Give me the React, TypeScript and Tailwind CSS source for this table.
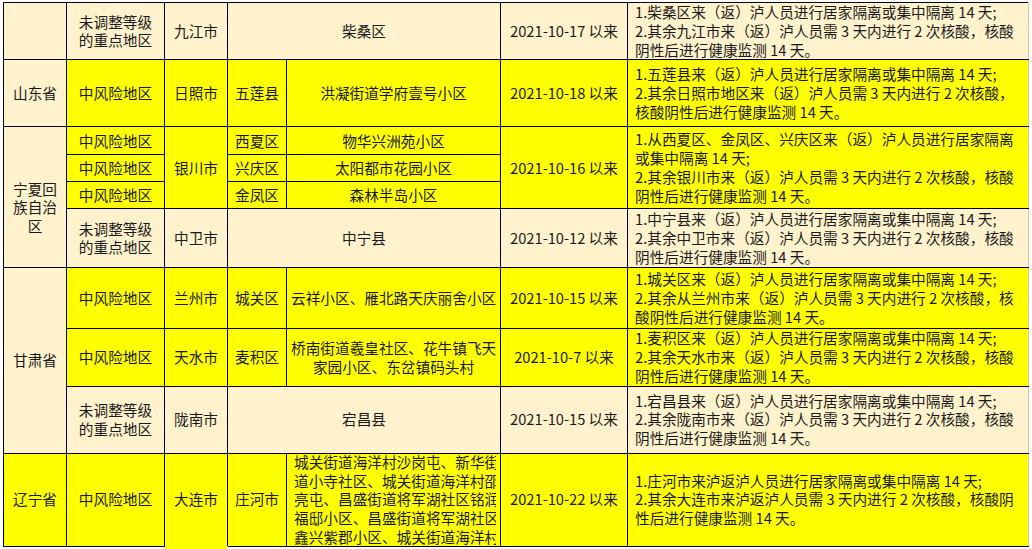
import type { ReactNode } from "react";

const Y = "bg-[#ffff00]";
const B = "bg-[#fff2cc]";

interface CellProps {
  bg: string;
  children?: ReactNode;
  rowSpan?: number;
  colSpan?: number;
  className?: string;
}

function Cell({ bg, children, rowSpan, colSpan, className = "" }: CellProps) {
  return (
    <td
      rowSpan={rowSpan}
      colSpan={colSpan}
      className={`border border-black px-[4px] py-0 text-center align-middle whitespace-nowrap ${bg} ${className}`}
    >
      {children}
    </td>
  );
}

function Note({ bg, lines, rowSpan }: { bg: string; lines: string[]; rowSpan?: number }) {
  return (
    <td
      rowSpan={rowSpan}
      className={`border border-black border-r-[#d9cba6] pl-[7px] pr-[4px] py-0 text-left align-middle whitespace-nowrap leading-[18.8px] ${bg}`}
    >
      {lines.map((l, i) => (
        <div key={i}>{l}</div>
      ))}
    </td>
  );
}

const unadjusted = (
  <>
    未调整等级
    <br />
    的重点地区
  </>
);

export default function App() {
  return (
    <div className="min-h-[549px] bg-white pt-[2px] pl-[3px] font-['Noto_Sans_CJK_SC','Noto_Sans_CJK_JP',sans-serif] text-[14.67px] leading-[18.6px] text-[#1a1a1a]">
      <table className="table-fixed border-collapse w-[1025px]">
        <colgroup>
          <col className="w-[63px]" />
          <col className="w-[98px]" />
          <col className="w-[63px]" />
          <col className="w-[59px]" />
          <col className="w-[214px]" />
          <col className="w-[127px]" />
          <col className="w-[401px]" />
        </colgroup>
        <tbody>
          <tr className="h-[57px]">
            <Cell bg={B} />
            <Cell bg={B}>{unadjusted}</Cell>
            <Cell bg={B}>九江市</Cell>
            <Cell bg={B} colSpan={2}>柴桑区</Cell>
            <Cell bg={B}>2021-10-17 以来</Cell>
            <Note
              bg={B}
              lines={[
                "1.柴桑区来（返）泸人员进行居家隔离或集中隔离 14 天;",
                "2.其余九江市来（返）泸人员需 3 天内进行 2 次核酸，核酸",
                "阴性后进行健康监测 14 天。",
              ]}
            />
          </tr>
          <tr className="h-[67px]">
            <Cell bg={B}>山东省</Cell>
            <Cell bg={Y}>中风险地区</Cell>
            <Cell bg={Y}>日照市</Cell>
            <Cell bg={Y}>五莲县</Cell>
            <Cell bg={Y}>洪凝街道学府壹号小区</Cell>
            <Cell bg={Y}>2021-10-18 以来</Cell>
            <Note
              bg={Y}
              lines={[
                "1.五莲县来（返）泸人员进行居家隔离或集中隔离 14 天;",
                "2.其余日照市地区来（返）泸人员需 3 天内进行 2 次核酸，",
                "核酸阴性后进行健康监测 14 天。",
              ]}
            />
          </tr>
          <tr className="h-[28px]">
            <Cell bg={B} rowSpan={4} className="pt-[20px]">
              宁夏回
              <br />
              族自治
              <br />区
            </Cell>
            <Cell bg={Y}>中风险地区</Cell>
            <Cell bg={Y} rowSpan={3}>银川市</Cell>
            <Cell bg={Y}>西夏区</Cell>
            <Cell bg={Y}>物华兴洲苑小区</Cell>
            <Cell bg={Y} rowSpan={3}>2021-10-16 以来</Cell>
            <Note
              bg={Y}
              rowSpan={3}
              lines={[
                "1.从西夏区、金凤区、兴庆区来（返）泸人员进行居家隔离",
                "或集中隔离 14 天;",
                "2.其余银川市来（返）泸人员需 3 天内进行 2 次核酸，核酸",
                "阴性后进行健康监测 14 天。",
              ]}
            />
          </tr>
          <tr className="h-[27px]">
            <Cell bg={Y}>中风险地区</Cell>
            <Cell bg={Y}>兴庆区</Cell>
            <Cell bg={Y}>太阳都市花园小区</Cell>
          </tr>
          <tr className="h-[27px]">
            <Cell bg={Y}>中风险地区</Cell>
            <Cell bg={Y}>金凤区</Cell>
            <Cell bg={Y}>森林半岛小区</Cell>
          </tr>
          <tr className="h-[59px]">
            <Cell bg={B}>{unadjusted}</Cell>
            <Cell bg={B}>中卫市</Cell>
            <Cell bg={B} colSpan={2}>中宁县</Cell>
            <Cell bg={B}>2021-10-12 以来</Cell>
            <Note
              bg={B}
              lines={[
                "1.中宁县来（返）泸人员进行居家隔离或集中隔离 14 天;",
                "2.其余中卫市来（返）泸人员需 3 天内进行 2 次核酸，核酸",
                "阴性后进行健康监测 14 天。",
              ]}
            />
          </tr>
          <tr className="h-[61px]">
            <Cell bg={B} rowSpan={3}>甘肃省</Cell>
            <Cell bg={Y}>中风险地区</Cell>
            <Cell bg={Y}>兰州市</Cell>
            <Cell bg={Y}>城关区</Cell>
            <Cell bg={Y}>云祥小区、雁北路天庆丽舍小区</Cell>
            <Cell bg={Y}>2021-10-15 以来</Cell>
            <Note
              bg={Y}
              lines={[
                "1.城关区来（返）泸人员进行居家隔离或集中隔离 14 天;",
                "2.其余从兰州市来（返）泸人员需 3 天内进行 2 次核酸，核",
                "酸阴性后进行健康监测 14 天。",
              ]}
            />
          </tr>
          <tr className="h-[57px]">
            <Cell bg={Y}>中风险地区</Cell>
            <Cell bg={Y}>天水市</Cell>
            <Cell bg={Y}>麦积区</Cell>
            <Cell bg={Y}>
              桥南街道羲皇社区、花牛镇飞天
              <br />
              家园小区、东岔镇码头村
            </Cell>
            <Cell bg={Y}>2021-10-7 以来</Cell>
            <Note
              bg={Y}
              lines={[
                "1.麦积区来（返）泸人员进行居家隔离或集中隔离 14 天;",
                "2.其余天水市来（返）泸人员需 3 天内进行 2 次核酸，核酸",
                "阴性后进行健康监测 14 天。",
              ]}
            />
          </tr>
          <tr className="h-[67px]">
            <Cell bg={B}>{unadjusted}</Cell>
            <Cell bg={B}>陇南市</Cell>
            <Cell bg={B} colSpan={2}>宕昌县</Cell>
            <Cell bg={B}>2021-10-15 以来</Cell>
            <Note
              bg={B}
              lines={[
                "1.宕昌县来（返）泸人员进行居家隔离或集中隔离 14 天;",
                "2.其余陇南市来（返）泸人员需 3 天内进行 2 次核酸，核酸",
                "阴性后进行健康监测 14 天。",
              ]}
            />
          </tr>
          <tr className="h-[93px]">
            <Cell bg={Y}>辽宁省</Cell>
            <Cell bg={Y}>中风险地区</Cell>
            <Cell bg={Y} className="border-b-[#ffff00]">大连市</Cell>
            <Cell bg={Y}>庄河市</Cell>
            <td className={`border border-black pl-[7px] pr-[4px] py-0 text-left whitespace-nowrap ${Y}`}>
              <div className="flex h-[92px] flex-col justify-center overflow-hidden">
                <div>城关街道海洋村沙岗屯、新华街</div>
                <div>道小寺社区、城关街道海洋村邵</div>
                <div>亮屯、昌盛街道将军湖社区铭润</div>
                <div>福邸小区、昌盛街道将军湖社区</div>
                <div>鑫兴紫郡小区、城关街道海洋村</div>
              </div>
            </td>
            <Cell bg={Y}>2021-10-22 以来</Cell>
            <Note
              bg={Y}
              lines={[
                "1.庄河市来泸返泸人员进行居家隔离或集中隔离 14 天;",
                "2.其余大连市来泸返泸人员需 3 天内进行 2 次核酸，核酸阴",
                "性后进行健康监测 14 天。",
              ]}
            />
          </tr>
        </tbody>
      </table>
      <div className="ml-[162px] h-[4px] w-[62px] bg-[#ffff00]" />
    </div>
  );
}
